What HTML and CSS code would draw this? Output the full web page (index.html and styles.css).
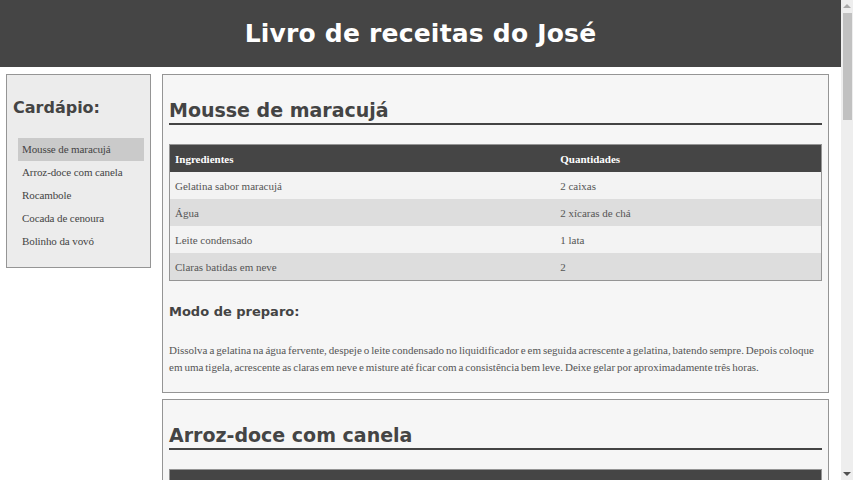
FILE: index.html
```html
<!DOCTYPE html>
<html lang="pt-BR">
<head>
<meta charset="utf-8">
<title>Livro de receitas do José</title>
<link rel="stylesheet" href="styles.css">
</head>
<body>
<header class="topo">
  <h1 class="titulo">Livro de receitas do José</h1>
</header>
<div class="layout">
  <nav class="menu">
    <h2 class="menu-titulo">Cardápio:</h2>
    <ul class="menu-lista">
      <li class="menu-item ativo">Mousse de maracujá</li>
      <li class="menu-item">Arroz-doce com canela</li>
      <li class="menu-item">Rocambole</li>
      <li class="menu-item">Cocada de cenoura</li>
      <li class="menu-item">Bolinho da vovó</li>
    </ul>
  </nav>
  <main class="receitas">
    <article class="receita">
      <h1 class="receita-nome">Mousse de maracujá</h1>
      <table class="tabela">
        <thead><tr><th>Ingredientes</th><th>Quantidades</th></tr></thead>
        <tbody>
          <tr><td>Gelatina sabor maracujá</td><td>2 caixas</td></tr>
          <tr><td>Água</td><td>2 xícaras de chá</td></tr>
          <tr><td>Leite condensado</td><td>1 lata</td></tr>
          <tr><td>Claras batidas em neve</td><td>2</td></tr>
        </tbody>
      </table>
      <h3 class="preparo-titulo">Modo de preparo:</h3>
      <p class="preparo">Dissolva a gelatina na água fervente, despeje o leite condensado no liquidificador e em seguida acrescente a gelatina, batendo sempre. Depois coloque em uma tigela, acrescente as claras em neve e misture até ficar com a consistência bem leve. Deixe gelar por aproximadamente três horas.</p>
    </article>
    <article class="receita">
      <h1 class="receita-nome">Arroz-doce com canela</h1>
      <table class="tabela">
        <thead><tr><th>Ingredientes</th><th>Quantidades</th></tr></thead>
        <tbody>
          <tr><td>Arroz</td><td>1 xícara de chá</td></tr>
          <tr><td>Água</td><td>2 xícaras de chá</td></tr>
          <tr><td>Leite</td><td>1 litro</td></tr>
          <tr><td>Açúcar</td><td>1 xícara de chá</td></tr>
          <tr><td>Leite condensado</td><td>1 lata</td></tr>
          <tr><td>Canela</td><td>a gosto, em pau e em pó</td></tr>
        </tbody>
      </table>
      <h3 class="preparo-titulo">Modo de preparo:</h3>
      <p class="preparo">Cozinhe o arroz na água até secar. Acrescente o leite, o açúcar e a canela em pau e deixe cozinhar em fogo baixo, mexendo de vez em quando, até engrossar. Junte o leite condensado, misture bem e cozinhe por mais cinco minutos. Sirva polvilhado com canela em pó, quente ou gelado, como preferir. Rende cerca de oito porções generosas.</p>
    </article>
    <article class="receita">
      <h1 class="receita-nome">Rocambole</h1>
      <table class="tabela">
        <thead><tr><th>Ingredientes</th><th>Quantidades</th></tr></thead>
        <tbody>
          <tr><td>Ovos</td><td>4</td></tr>
          <tr><td>Açúcar</td><td>1 xícara de chá</td></tr>
          <tr><td>Farinha de trigo</td><td>1 xícara de chá</td></tr>
          <tr><td>Fermento em pó</td><td>1 colher de sopa</td></tr>
          <tr><td>Leite</td><td>meia xícara de chá</td></tr>
          <tr><td>Doce de leite</td><td>400 gramas</td></tr>
          <tr><td>Açúcar de confeiteiro</td><td>para polvilhar</td></tr>
          <tr><td>Manteiga</td><td>para untar</td></tr>
        </tbody>
      </table>
      <h3 class="preparo-titulo">Modo de preparo:</h3>
      <p class="preparo">Bata as claras em neve, acrescente as gemas e o açúcar e continue batendo. Junte a farinha, o leite e o fermento, misturando delicadamente. Despeje em uma assadeira untada e forrada com papel manteiga e asse em forno médio por cerca de quinze minutos. Desenforme sobre um pano úmido polvilhado com açúcar, recheie com o doce de leite e enrole ainda quente.</p>
    </article>
    <article class="receita">
      <h1 class="receita-nome">Cocada de cenoura</h1>
      <table class="tabela">
        <thead><tr><th>Ingredientes</th><th>Quantidades</th></tr></thead>
        <tbody>
          <tr><td>Cenoura ralada</td><td>3 xícaras de chá</td></tr>
          <tr><td>Coco ralado</td><td>100 gramas</td></tr>
          <tr><td>Açúcar</td><td>2 xícaras de chá</td></tr>
          <tr><td>Leite condensado</td><td>1 lata</td></tr>
          <tr><td>Manteiga</td><td>1 colher de sopa</td></tr>
        </tbody>
      </table>
      <h3 class="preparo-titulo">Modo de preparo:</h3>
      <p class="preparo">Em uma panela, misture a cenoura, o açúcar e a manteiga e leve ao fogo baixo, mexendo sempre. Quando começar a desgrudar do fundo, acrescente o coco ralado e o leite condensado e cozinhe por mais alguns minutos. Despeje em uma travessa untada, deixe esfriar e corte em quadrados.</p>
    </article>
    <article class="receita">
      <h1 class="receita-nome">Bolinho da vovó</h1>
      <table class="tabela">
        <thead><tr><th>Ingredientes</th><th>Quantidades</th></tr></thead>
        <tbody>
          <tr><td>Farinha de trigo</td><td>2 xícaras de chá</td></tr>
          <tr><td>Ovos</td><td>2</td></tr>
          <tr><td>Açúcar</td><td>meia xícara de chá</td></tr>
          <tr><td>Leite</td><td>1 xícara de chá</td></tr>
          <tr><td>Fermento em pó</td><td>1 colher de sopa</td></tr>
          <tr><td>Óleo</td><td>para fritar</td></tr>
          <tr><td>Canela e açúcar</td><td>para polvilhar</td></tr>
        </tbody>
      </table>
      <h3 class="preparo-titulo">Modo de preparo:</h3>
      <p class="preparo">Misture os ovos, o açúcar e o leite. Acrescente a farinha aos poucos e, por último, o fermento. Frite colheradas da massa em óleo quente até dourarem, escorra em papel absorvente e passe na mistura de canela e açúcar. Sirva em seguida, de preferência com um café bem fresquinho.</p>
    </article>
  </main>
</div>
<div class="barra-rolagem" aria-hidden="true">
  <div class="barra-botao barra-cima"><span class="seta seta-cima"></span></div>
  <div class="barra-trilho"><div class="barra-polegar"></div></div>
  <div class="barra-botao barra-baixo"><span class="seta seta-baixo"></span></div>
</div>
</body>
</html>
```

FILE: styles.css
```css
html {
  background: #ffffff;
  scrollbar-width: none;
}

body {
  margin: 0 12px 0 0;
  font-family: "Liberation Serif", "Times New Roman", serif;
  font-size: 11px;
  color: #555555;
}

.topo {
  background: #454545;
  height: 67px;
  display: flex;
  align-items: center;
  justify-content: center;
}

.titulo {
  margin: 0;
  font-family: "DejaVu Sans", Verdana, sans-serif;
  font-weight: bold;
  font-size: 25px;
  letter-spacing: 0.2px;
  color: #ffffff;
}

.layout {
  display: grid;
  grid-template-columns: 145px 1fr;
  column-gap: 11px;
  align-items: start;
  padding: 7px 12px 7px 6px;
}

.menu {
  background: #ececec;
  border: 1px solid #959595;
  padding: 0 6px 14px 6px;
}

.menu-titulo {
  margin: 23px 0 20px 0;
  font-family: "DejaVu Sans", Verdana, sans-serif;
  font-weight: bold;
  font-size: 16px;
  line-height: 20px;
  color: #444444;
}

.menu-lista {
  list-style: none;
  margin: 0;
  padding: 0 0 0 5px;
}

.menu-item {
  height: 23px;
  line-height: 23px;
  padding-left: 4px;
  color: #444444;
  letter-spacing: -0.1px;
}

.menu-item.ativo {
  background: #cacaca;
}

.receitas {
  display: flex;
  flex-direction: column;
  gap: 6px;
}

.receita {
  background: #f6f6f6;
  border: 1px solid #959595;
  padding: 0 6px;
}

.receita-nome {
  margin: 24px 0 19px 0;
  padding-bottom: 1px;
  border-bottom: 2px solid #444444;
  font-family: "DejaVu Sans", Verdana, sans-serif;
  font-weight: bold;
  font-size: 19px;
  line-height: 23px;
  color: #444444;
}

.tabela {
  width: 100%;
  border-collapse: collapse;
  border: 1px solid #959595;
}

.tabela th,
.tabela td {
  height: 27px;
  padding: 0 5px;
  text-align: left;
  vertical-align: middle;
}

.tabela th {
  background: #454545;
  color: #ffffff;
  font-weight: bold;
}

.tabela tbody tr:nth-child(odd) {
  background: #f3f3f3;
}

.tabela tbody tr:nth-child(even) {
  background: #dddddd;
}

.preparo-titulo {
  margin: 23px 0 22px 0;
  font-family: "DejaVu Sans", Verdana, sans-serif;
  font-weight: bold;
  font-size: 13px;
  line-height: 16px;
  color: #444444;
}

.preparo {
  margin: 0 0 16px 0;
  line-height: 17px;
  word-spacing: -0.8px;
}

/* imitação da barra de rolagem do navegador */
.barra-rolagem {
  position: fixed;
  top: 0;
  right: 0;
  bottom: 0;
  width: 12px;
  background: #eeeeee;
  display: flex;
  flex-direction: column;
}

.barra-botao {
  height: 12px;
  display: flex;
  align-items: center;
  justify-content: center;
}

.seta {
  width: 0;
  height: 0;
  border-left: 4px solid transparent;
  border-right: 4px solid transparent;
}

.seta-cima {
  border-bottom: 4px solid #a9a9a9;
}

.seta-baixo {
  border-top: 4px solid #505050;
}

.barra-trilho {
  flex: 1;
  padding: 1px 1px 0 2px;
}

.barra-polegar {
  height: 107px;
  background: #c1c1c1;
}
```
